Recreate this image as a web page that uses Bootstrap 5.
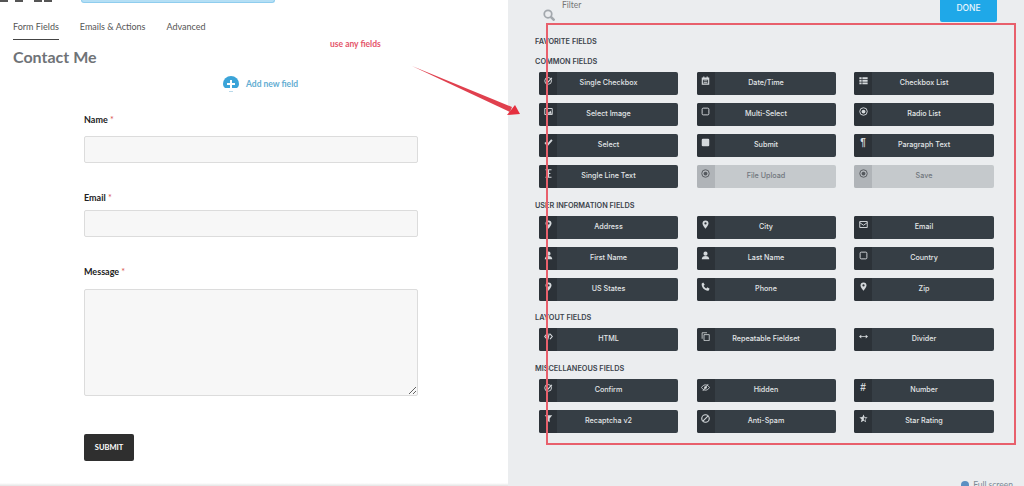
<!DOCTYPE html>
<html lang="en">
<head>
<meta charset="UTF-8">
<title>Contact Me - Form Fields</title>
<link href="https://cdn.jsdelivr.net/npm/bootstrap@5.3.3/dist/css/bootstrap.min.css" rel="stylesheet">
<style>
html, body { width: 1024px; height: 486px; overflow: hidden; background: #fff; font-family: "Inter", "Liberation Sans", sans-serif; }
.page { width: 1024px; height: 486px; position: relative; overflow: hidden; }
.left-pane { width: 508px; height: 486px; flex: none; background: #fff; font-family: "Lato", "Liberation Sans", sans-serif; }
.top-clip { height: 3px; }
.clip-dark { width: 8px; height: 2px; background: #555; margin-right: 7px; }
.clip-dark.tight { margin-right: 2px; }
.clip-blue { width: 194px; height: 3px; margin-left: 27px; background: #b5dff5; border: 1px solid #8fcdee; border-top: 0; border-radius: 0 0 4px 4px; }
.tabs-row { padding: 18px 0 0 13px; gap: 21px; }
.tab-item { font-size: 9px; line-height: 12px; color: #555; padding-bottom: 6px; border-bottom: 1px solid transparent; }
.tab-item.on { border-bottom-color: #444; }
.form-title { font-size: 16px; line-height: 20px; font-weight: 700; color: #6f7377; margin: 7px 0 0 13px; }
.add-row { margin: 9px 0 0 223px; height: 17px; gap: 7px; color: #63add2; font-size: 8.5px; font-weight: 700; }
.form-area { margin: 22px 90px 0 84px; }
.fld-label { font-size: 9px; line-height: 10px; font-weight: 700; color: #222; margin-bottom: 11px; }
.fld-label span { color: #d9534f; font-weight: 400; }
.fld-label.lbl-email { margin: 30px 0 7px; }
.fld-label.lbl-msg { margin: 30px 0 12px; }
.fld-input { height: 27px; min-height: 0; padding: 0; background: #f7f7f7; border: 1px solid #dcdcdc; border-radius: 2px; }
.fld-input.msg-box { height: 107px; }
.btn-send { display: block; width: 50px; height: 27px; margin-top: 38px; padding: 0; background: #2f2f2f; border: 0; border-radius: 2px; color: #fff; font-size: 7.5px; font-weight: 700; }
.right-pane { width: 516px; height: 486px; flex: none; background: #ebedef; position: relative; }
.head-row { height: 37.3px; }
.search-ico { margin: 9px 0 0 35px; width: 12px; height: 12px; flex: none; }
.filter-txt { font-size: 8.5px; line-height: 10px; color: #777; margin: 0 0 0 7px; font-family: "Lato", sans-serif; }
.btn-done { width: 57px; height: 22px; margin-left: auto; margin-right: 27px; padding: 0 0 6px; background: #1fa8e8; border: 0; border-radius: 0 0 2px 2px; color: #e8f6fd; font-size: 8.5px; font-weight: 500; }
.grp-title { font-size: 7.3px; line-height: 10px; font-weight: 600; color: #3c444c; margin: 0 0 0 27px; text-transform: uppercase; }
.grp-title.next { margin-top: 10px; }
.grp-title.sec { margin-top: 12.5px; }
.grp-title.sec2 { margin-top: 13px; }
.fld-grid { display: grid; grid-template-columns: 139px 139px 140px; column-gap: 18.5px; row-gap: 8px; margin: 5px 0 0 31px; }
.fld-btn { height: 23px; background: #363e45; border-radius: 2px; color: #e3e6e8; font-size: 7.2px; font-weight: 500; }
.fld-btn.off { background: #c5c9cc; color: #70767c; }
.fld-ico { width: 18px; height: 23px; flex: none; background: #2c3238; border-radius: 2px 0 0 2px; padding-top: 4px; color: #d5d9dc; font-size: 10px; line-height: 10px; font-weight: 700; font-family: "Liberation Sans", sans-serif; text-align: center; }
.fld-btn.off .fld-ico { background: #b0b4b8; color: #55595e; }
.fld-ico svg { width: 9px; height: 9px; display: block; margin: 0 auto; }
.fld-txt { flex: 1; text-align: center; padding-right: 18px; }
.full-link { position: absolute; right: 11px; top: 480px; font-size: 8.5px; color: #7d8a96; gap: 4px; line-height: 10px; font-family: "Lato", sans-serif; }
.full-dot { width: 8px; height: 8px; border-radius: 50%; background: #5b8fc2; flex: none; }
.bottom-shade { position: absolute; left: 0; top: 483px; width: 508px; height: 3px; background: linear-gradient(#fff, #e3e3e3); }
.note-layer { position: absolute; left: 0; top: 0; pointer-events: none; }
.note-txt { position: absolute; left: 330px; top: 39px; font-size: 8.5px; line-height: 11px; font-weight: 700; color: #e4556a; font-family: "Lato", sans-serif; }
</style>
</head>
<body>
<svg width="0" height="0" class="d-none">
  <defs>
    <symbol id="i-check-circle" viewBox="0 0 24 24"><circle cx="11" cy="13" r="9" fill="none" stroke="currentColor" stroke-width="2.5"/><path d="M7 12l4 4 10-11" fill="none" stroke="currentColor" stroke-width="3"/></symbol>
    <symbol id="i-cal" viewBox="0 0 24 24"><path fill="currentColor" d="M6 1h3v3h6V1h3v3h4v19H2V4h4zM5 10v10h14V10z"/><path fill="currentColor" d="M7 12h10v2H7zm0 4h10v2H7z"/></symbol>
    <symbol id="i-list" viewBox="0 0 24 24"><path fill="currentColor" d="M1 3h6v5H1zm8 0h14v5H9zM1 10h6v5H1zm8 0h14v5H9zM1 17h6v5H1zm8 0h14v5H9z"/></symbol>
    <symbol id="i-img" viewBox="0 0 24 24"><path fill="none" stroke="currentColor" stroke-width="2.5" d="M2 4h20v16H2z"/><path fill="currentColor" d="M5 18l5-6 3 3 4-6 4 9z"/><circle cx="7" cy="8" r="2" fill="currentColor"/></symbol>
    <symbol id="i-sq" viewBox="0 0 24 24"><rect x="3" y="3" width="18" height="18" rx="3" fill="none" stroke="currentColor" stroke-width="2.5"/></symbol>
    <symbol id="i-radio" viewBox="0 0 24 24"><circle cx="12" cy="12" r="10" fill="none" stroke="currentColor" stroke-width="2.5"/><circle cx="12" cy="12" r="5" fill="currentColor"/></symbol>
    <symbol id="i-check" viewBox="0 0 24 24"><path fill="none" stroke="currentColor" stroke-width="5" d="M3 12l6 7L21 5"/></symbol>
    <symbol id="i-stop" viewBox="0 0 24 24"><rect x="2" y="2" width="20" height="20" rx="3" fill="currentColor"/></symbol>
    <symbol id="i-cursor" viewBox="0 0 24 24"><path fill="none" stroke="currentColor" stroke-width="3" d="M4 2h16M4 22h16M12 2v20M7 12h10"/></symbol>
    <symbol id="i-user" viewBox="0 0 24 24"><circle cx="12" cy="7" r="5.5" fill="currentColor"/><path fill="currentColor" d="M2 22c0-6 4-9 10-9s10 3 10 9z"/></symbol>
    <symbol id="i-pin" viewBox="0 0 24 24"><path fill="currentColor" fill-rule="evenodd" d="M12 1a8 8 0 0 0-8 8c0 5 8 14 8 14s8-9 8-14a8 8 0 0 0-8-8zm0 5a3 3 0 1 1 0 6 3 3 0 0 1 0-6z"/></symbol>
    <symbol id="i-mail" viewBox="0 0 24 24"><path fill="none" stroke="currentColor" stroke-width="2.5" d="M2 4h20v16H2zM2 7l10 7 10-7"/></symbol>
    <symbol id="i-phone" viewBox="0 0 24 24"><path fill="currentColor" d="M6 1l4 6-3 3c1 3 4 6 7 7l3-3 6 4-3 5C10 24 0 14 2 4z"/></symbol>
    <symbol id="i-code" viewBox="0 0 24 24"><path fill="none" stroke="currentColor" stroke-width="3" d="M8 5l-6 7 6 7m8-14l6 7-6 7M14 4l-4 16"/></symbol>
    <symbol id="i-copy" viewBox="0 0 24 24"><path fill="none" stroke="currentColor" stroke-width="2.2" d="M8 7h14v16H8zM3 18V2h13"/></symbol>
    <symbol id="i-arrows" viewBox="0 0 24 24"><path fill="currentColor" d="M6 7v4h12V7l6 5-6 5v-4H6v4l-6-5z"/></symbol>
    <symbol id="i-eye" viewBox="0 0 24 24"><path fill="none" stroke="currentColor" stroke-width="2.5" d="M1 12c4-5 7-7 11-7s7 2 11 7c-4 5-7 7-11 7s-7-2-11-7z"/><circle cx="12" cy="12" r="3.5" fill="currentColor"/><path stroke="currentColor" stroke-width="2.5" d="M5 21L19 3"/></symbol>
    <symbol id="i-funnel" viewBox="0 0 24 24"><path fill="currentColor" d="M2 3h20l-7 9v10l-6-4v-6z"/></symbol>
    <symbol id="i-ban" viewBox="0 0 24 24"><circle cx="12" cy="12" r="10" fill="none" stroke="currentColor" stroke-width="3"/><path stroke="currentColor" stroke-width="3" d="M5 19L19 5"/></symbol>
    <symbol id="i-star" viewBox="0 0 24 24"><path fill="currentColor" d="M12 1l3 7 8 1-6 5 2 8-7-4-7 4 2-8-6-5 8-1z"/><path fill="#2c3238" d="M13 7l1.200 3 5 .5-3.700 3 1.200 5-3.700-2.200z"/></symbol>
  </defs>
</svg>

<div class="page d-flex">
  <div class="left-pane">
    <div class="top-clip d-flex">
      <div class="clip-dark"></div>
      <div class="clip-dark"></div>
      <div class="clip-dark tight ms-1"></div>
      <div class="clip-dark tight"></div>
      <div class="clip-blue"></div>
    </div>
    <div class="tabs-row d-flex">
      <div class="tab-item on">Form Fields</div>
      <div class="tab-item">Emails &amp; Actions</div>
      <div class="tab-item">Advanced</div>
    </div>
    <div class="form-title">Contact Me</div>
    <div class="add-row d-flex align-items-center">
      <svg width="16" height="17" viewBox="0 0 16 17">
        <path fill="#3ba4d8" d="M0 8a8 8 0 0 1 16 0c0 2-1 3-2 4H2C1 11 0 10 0 8z"/>
        <path fill="#fff" d="M7 4h2v3h3v2H9v3H7V9H4V7h3z"/>
        <path fill="#b9d9ea" d="M6 15h4v1H6z"/>
      </svg>
      <div>Add new field</div>
    </div>
    <form class="form-area">
      <div class="fld-label">Name <span>*</span></div>
      <input type="text" class="form-control fld-input">
      <div class="fld-label lbl-email">Email <span>*</span></div>
      <input type="text" class="form-control fld-input">
      <div class="fld-label lbl-msg">Message <span>*</span></div>
      <textarea class="form-control fld-input msg-box"></textarea>
      <button type="button" class="btn btn-send">SUBMIT</button>
    </form>
  </div>

  <div class="right-pane">
    <div class="head-row d-flex align-items-start">
      <svg class="search-ico" viewBox="0 0 24 24"><circle cx="10" cy="10" r="7.500" fill="none" stroke="#a3a8ad" stroke-width="3.500"/><path stroke="#a3a8ad" stroke-width="5" d="M15 15l8 8"/></svg>
      <div class="filter-txt">Filter</div>
      <button type="button" class="btn btn-done">DONE</button>
    </div>

    <div class="grp-title">Favorite Fields</div>
    <div class="grp-title next">Common Fields</div>
    <div class="fld-grid">
      <div class="fld-btn d-flex align-items-center"><div class="fld-ico"><svg><use href="#i-check-circle"/></svg></div><div class="fld-txt">Single Checkbox</div></div>
      <div class="fld-btn d-flex align-items-center"><div class="fld-ico"><svg><use href="#i-cal"/></svg></div><div class="fld-txt">Date/Time</div></div>
      <div class="fld-btn d-flex align-items-center"><div class="fld-ico"><svg><use href="#i-list"/></svg></div><div class="fld-txt">Checkbox List</div></div>
      <div class="fld-btn d-flex align-items-center"><div class="fld-ico"><svg><use href="#i-img"/></svg></div><div class="fld-txt">Select Image</div></div>
      <div class="fld-btn d-flex align-items-center"><div class="fld-ico"><svg><use href="#i-sq"/></svg></div><div class="fld-txt">Multi-Select</div></div>
      <div class="fld-btn d-flex align-items-center"><div class="fld-ico"><svg><use href="#i-radio"/></svg></div><div class="fld-txt">Radio List</div></div>
      <div class="fld-btn d-flex align-items-center"><div class="fld-ico"><svg><use href="#i-check"/></svg></div><div class="fld-txt">Select</div></div>
      <div class="fld-btn d-flex align-items-center"><div class="fld-ico"><svg><use href="#i-stop"/></svg></div><div class="fld-txt">Submit</div></div>
      <div class="fld-btn d-flex align-items-center"><div class="fld-ico">¶</div><div class="fld-txt">Paragraph Text</div></div>
      <div class="fld-btn d-flex align-items-center"><div class="fld-ico"><svg><use href="#i-cursor"/></svg></div><div class="fld-txt">Single Line Text</div></div>
      <div class="fld-btn off d-flex align-items-center"><div class="fld-ico"><svg><use href="#i-radio"/></svg></div><div class="fld-txt">File Upload</div></div>
      <div class="fld-btn off d-flex align-items-center"><div class="fld-ico"><svg><use href="#i-radio"/></svg></div><div class="fld-txt">Save</div></div>
    </div>

    <div class="grp-title sec">User Information Fields</div>
    <div class="fld-grid">
      <div class="fld-btn d-flex align-items-center"><div class="fld-ico"><svg><use href="#i-pin"/></svg></div><div class="fld-txt">Address</div></div>
      <div class="fld-btn d-flex align-items-center"><div class="fld-ico"><svg><use href="#i-pin"/></svg></div><div class="fld-txt">City</div></div>
      <div class="fld-btn d-flex align-items-center"><div class="fld-ico"><svg><use href="#i-mail"/></svg></div><div class="fld-txt">Email</div></div>
      <div class="fld-btn d-flex align-items-center"><div class="fld-ico"><svg><use href="#i-user"/></svg></div><div class="fld-txt">First Name</div></div>
      <div class="fld-btn d-flex align-items-center"><div class="fld-ico"><svg><use href="#i-user"/></svg></div><div class="fld-txt">Last Name</div></div>
      <div class="fld-btn d-flex align-items-center"><div class="fld-ico"><svg><use href="#i-sq"/></svg></div><div class="fld-txt">Country</div></div>
      <div class="fld-btn d-flex align-items-center"><div class="fld-ico"><svg><use href="#i-pin"/></svg></div><div class="fld-txt">US States</div></div>
      <div class="fld-btn d-flex align-items-center"><div class="fld-ico"><svg><use href="#i-phone"/></svg></div><div class="fld-txt">Phone</div></div>
      <div class="fld-btn d-flex align-items-center"><div class="fld-ico"><svg><use href="#i-pin"/></svg></div><div class="fld-txt">Zip</div></div>
    </div>

    <div class="grp-title sec">Layout Fields</div>
    <div class="fld-grid">
      <div class="fld-btn d-flex align-items-center"><div class="fld-ico"><svg><use href="#i-code"/></svg></div><div class="fld-txt">HTML</div></div>
      <div class="fld-btn d-flex align-items-center"><div class="fld-ico"><svg><use href="#i-copy"/></svg></div><div class="fld-txt">Repeatable Fieldset</div></div>
      <div class="fld-btn d-flex align-items-center"><div class="fld-ico"><svg><use href="#i-arrows"/></svg></div><div class="fld-txt">Divider</div></div>
    </div>

    <div class="grp-title sec2">Miscellaneous Fields</div>
    <div class="fld-grid">
      <div class="fld-btn d-flex align-items-center"><div class="fld-ico"><svg><use href="#i-check-circle"/></svg></div><div class="fld-txt">Confirm</div></div>
      <div class="fld-btn d-flex align-items-center"><div class="fld-ico"><svg><use href="#i-eye"/></svg></div><div class="fld-txt">Hidden</div></div>
      <div class="fld-btn d-flex align-items-center"><div class="fld-ico">#</div><div class="fld-txt">Number</div></div>
      <div class="fld-btn d-flex align-items-center"><div class="fld-ico"><svg><use href="#i-funnel"/></svg></div><div class="fld-txt">Recaptcha v2</div></div>
      <div class="fld-btn d-flex align-items-center"><div class="fld-ico"><svg><use href="#i-ban"/></svg></div><div class="fld-txt">Anti-Spam</div></div>
      <div class="fld-btn d-flex align-items-center"><div class="fld-ico"><svg><use href="#i-star"/></svg></div><div class="fld-txt">Star Rating</div></div>
    </div>

    <div class="full-link d-flex align-items-center"><div class="full-dot"></div><div>Full screen</div></div>
  </div>

  <div class="bottom-shade"></div>

  <!-- annotations drawn on top of the screenshot -->
  <svg class="note-layer" width="1024" height="486">
    <rect x="547" y="24" width="468" height="420" fill="none" stroke="#e8606c" stroke-width="2"/>
    <path d="M412 66L512 107L510 112z" fill="#e0404e"/>
    <path d="M515 105L520 114L507 115z" fill="#e5303f"/>
  </svg>
  <div class="note-txt">use any fields</div>
</div>

<script src="https://cdn.jsdelivr.net/npm/bootstrap@5.3.3/dist/js/bootstrap.bundle.min.js"></script>
</body>
</html>
